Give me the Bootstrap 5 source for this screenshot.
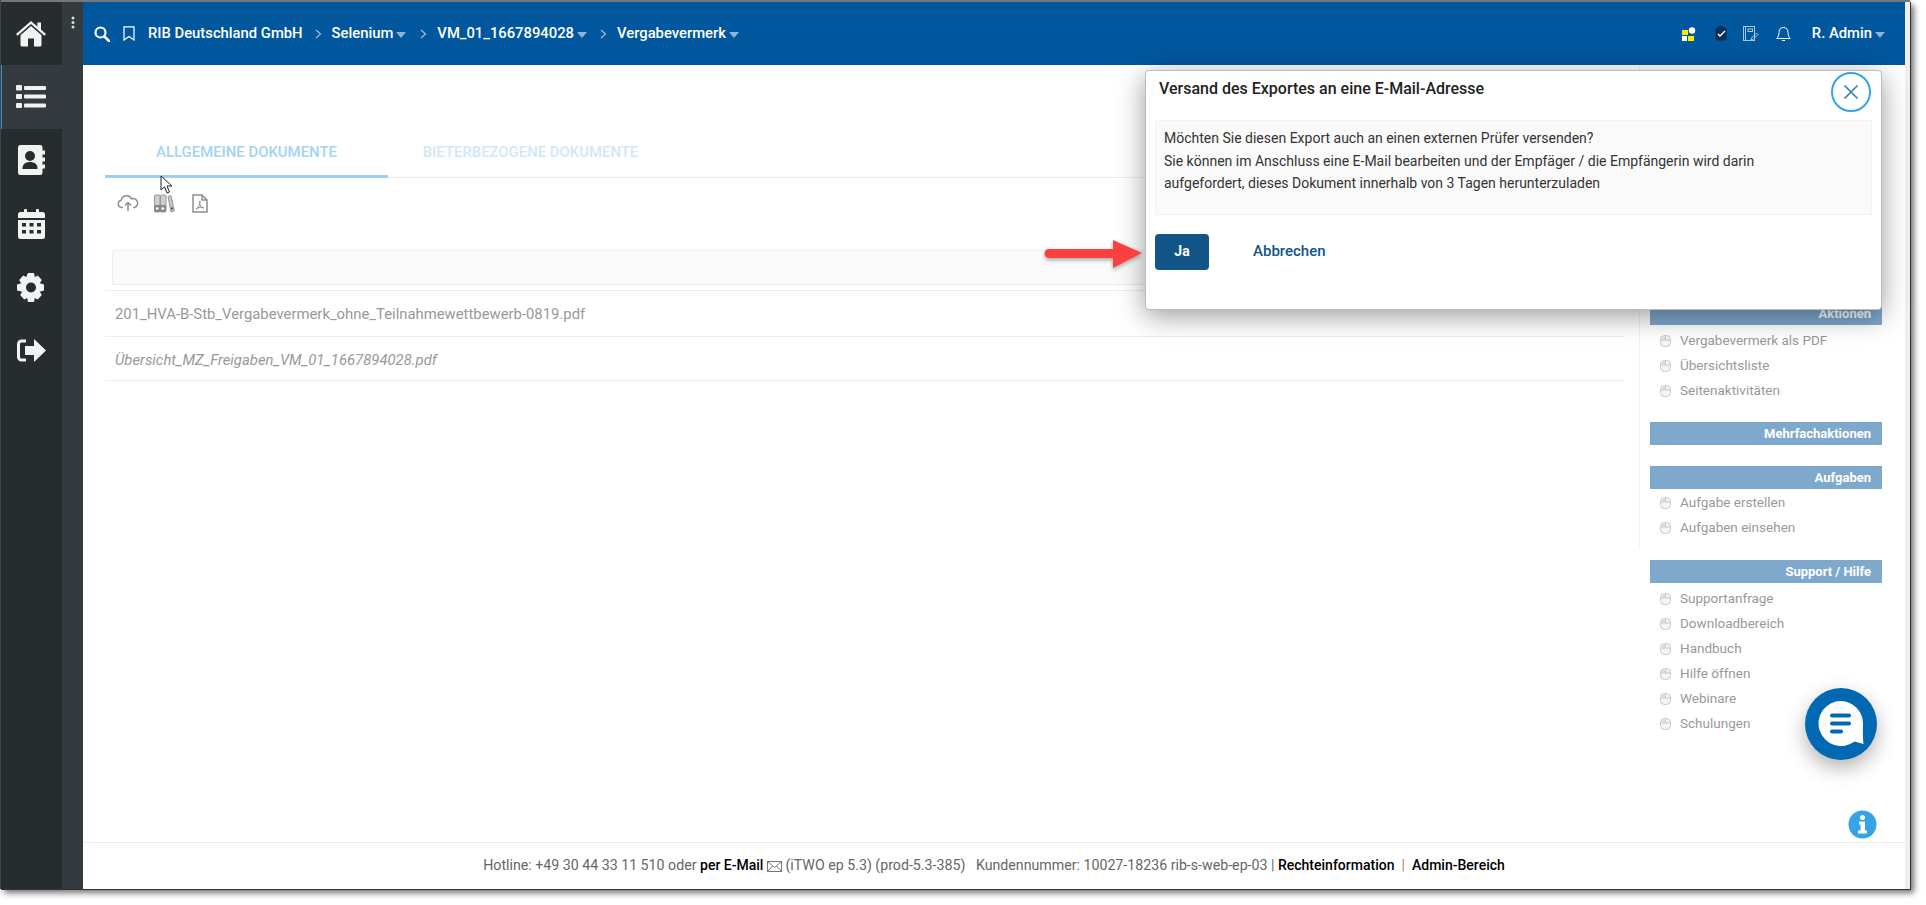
<!DOCTYPE html>
<html lang="de"><head><meta charset="utf-8"><title>Vergabevermerk</title>
<link href="https://cdn.jsdelivr.net/npm/bootstrap@5.3.0/dist/css/bootstrap.min.css" rel="stylesheet">
<style>
html,body{height:100%;overflow:hidden}
body{background:#fff;font-family:Roboto,"Liberation Sans",sans-serif;font-size:14px;color:#666;padding:2px 0 0 1px}
.shot-frame{position:relative;width:1910px;height:888px;background:#efefef;border-right:1px solid #333;border-bottom:1px solid #333;box-shadow:3px 3px 6px rgba(0,0,0,.55)}
.shot-frame::before{content:"";position:absolute;left:-1px;top:-2px;right:0;height:2px;background:#777}
.shot-frame::after{content:"";position:absolute;left:-1px;top:-2px;bottom:0;width:1px;background:#444}
.app-wrap{width:1904px;height:887px}
.side-rail{width:82px;background:#343b3e;flex:none}
.side-icons{width:61px;background:#272c2e}
.side-cell{height:63.5px;display:flex;align-items:center;justify-content:center;padding-right:1px}
.side-cell:first-child{height:63px}
.side-cell.on{background:#343b3e;border-left:1px solid #3c8dc8;padding-right:2px}
.side-strip{width:21px;padding-top:14px}
.top-bar{height:63px;background:#00579d;color:#fff;font-weight:500;font-size:14.8px;padding-left:11px;padding-right:20px}
.crumb-sep{margin:0 10px 0 12px}
.caret-dn{display:inline-block;width:0;height:0;border:5px solid transparent;border-top:6px solid #8fb4d3;border-bottom:0;margin-left:3px;margin-top:2px}
.work-area{background:#fff;min-height:0}
.doc-col{width:1543px;padding-left:22px;flex:none}
.tab-row{margin-top:77px;height:36px;border-bottom:1px solid #eee;width:1520px}
.tab-one,.tab-two{font-size:14.9px;font-weight:500;height:36px;line-height:20px;text-align:center;color:#a3d3f3}
.tab-one{width:283px;border-bottom:3px solid #9ccff2;height:36px}
.tab-two{width:285px;color:#cfe7f8}
.tool-row{height:40px;padding:10px 0 0 12px;gap:15px}
.filter-box{height:35px;margin:32px 0 5px 7px;background:#fafafa;border:1px solid #eee;border-radius:2px;width:1513px}
.doc-line{height:45.500px;line-height:46px;border-top:1px solid #eee;color:#999;font-size:14.85px;padding-left:10px;width:1520px}
.doc-line.it{font-style:italic;height:45px;border-bottom:1px solid #eee}
.act-col{width:279px;flex:none;padding-left:24px;position:relative}
.act-col::before{content:"";position:absolute;left:13px;top:0;height:485px;width:1px;background:#f2f2f2}
.act-head{background:#7fa9cc;color:#fff;font-weight:700;font-size:13px;text-align:right;height:23px;line-height:23px;padding-right:11px;width:232px}
.act-list{list-style:none;margin:0;padding:3px 0 0 10px}
.act-list.tight{padding-top:1px}
.act-list li{height:25px;line-height:25px;color:#999;font-size:13.5px;display:flex;align-items:center;gap:9px}
.bar-foot{height:47px;background:#fff;border-top:1px solid #eee;color:#666;font-size:14.2px;line-height:45px}
.bar-foot b{color:#000;font-weight:500;font-size:14px}
.bar-foot .pipe{color:#b8835a}
.dlg-box{position:absolute;left:1144px;top:68px;width:737px;height:240px;background:#fff;border:1px solid #bbb;border-radius:4px;box-shadow:0 6px 28px rgba(0,0,0,.4);padding:0 9px}
.dlg-title{font-size:16px;font-weight:500;color:#222;padding:8px 4px 0;height:49px;line-height:20px}
.dlg-msg{background:#fafafa;border:1px solid #f3f3f3;height:95px;padding:6px 8px;color:#333;font-size:14px;line-height:22.5px}
.dlg-x{position:absolute;right:10px;top:1px;width:40px;height:40px;border:2px solid #36a3e6;border-radius:50%;background:#fff;display:flex;align-items:center;justify-content:center;padding:0}
.dlg-yes{background:#115589;color:#fff;font-weight:700;font-size:14px;width:54px;height:36px;padding:0 0 2px;border:0;border-radius:4px}
.dlg-yes:hover{background:#115589;color:#fff}
.dlg-no{color:#115589;font-weight:500;font-size:15px;margin-left:44px;padding:0 0 2px;border:0}
.dlg-acts{margin-top:19px;align-items:center}
.over-arrow{position:absolute;left:1042px;top:236px}
.over-cursor{position:absolute;left:159px;top:173px}
.chat-fab{position:absolute;left:1804px;top:686px;width:72px;height:72px;border-radius:50%;background:#0069b1;box-shadow:0 8px 20px rgba(0,0,0,.3);display:flex;align-items:center;justify-content:center}
.info-fab{position:absolute;left:1847px;top:808px;width:29px;height:29px}
</style></head><body>
<svg width="0" height="0" class="position-absolute"><defs><symbol id="mouse-ico" viewBox="0 0 11 12"><rect x=".5" y=".5" width="10" height="11" rx="4" fill="#f4f4f4" stroke="#c8c8c8"/><rect x="2" y="1.500" width="3" height="3" fill="#f4d9c4"/><path d="M.5 5h10M5.500.5V5" stroke="#c8c8c8"/></symbol></defs></svg>
<div class="shot-frame">
<div class="app-wrap d-flex">
 <aside class="side-rail d-flex">
  <div class="side-icons">
   <div class="side-cell"><svg width="30" height="26" viewBox="0 0 30 26" fill="#f2f2f2"><path d="M15 0 0 13l1.600 1.800L15 3l13.400 11.800L30 13l-5-4.400V1.500h-3.600v4L15 0z"/><path d="M15 5 4.500 14.200V24a1.500 1.500 0 0 0 1.500 1.500h6v-8h6v8h6a1.500 1.500 0 0 0 1.500-1.500v-9.800z"/></svg></div>
   <div class="side-cell on"><svg width="30" height="25" viewBox="0 0 30 25" fill="#f2f2f2"><rect y="1" width="6" height="5.500" rx="1"/><rect y="10" width="6" height="5" rx="1"/><rect y="19" width="6" height="5" rx="1"/><rect x="8" y="2" width="22" height="4" rx="1"/><rect x="8" y="10.500" width="22" height="4" rx="1"/><rect x="8" y="19.500" width="22" height="4" rx="1"/></svg></div>
   <div class="side-cell"><svg width="27" height="30" viewBox="0 0 27 30"><path fill="#f2f2f2" d="M2.500 0H22a2.500 2.500 0 0 1 2.500 2.500v3H27v4h-2.500v3H27v4h-2.500v3H27v4h-2.500v4A2.500 2.500 0 0 1 22 30H2.500A2.500 2.500 0 0 1 0 27.500v-25A2.500 2.500 0 0 1 2.500 0z"/><circle cx="12" cy="11" r="5" fill="#272c2e"/><path fill="#272c2e" d="M4.500 23c0-4 3.500-6 7.500-6s7.500 2 7.500 6v1h-15z"/></svg></div>
   <div class="side-cell"><svg width="27" height="30" viewBox="0 0 27 30" fill="#f2f2f2"><rect x="6" width="3" height="6" rx="1"/><rect x="18" width="3" height="6" rx="1"/><path d="M2.500 3H24.500A2.500 2.500 0 0 1 27 5.500V9H0V5.500A2.500 2.500 0 0 1 2.500 3z"/><path fill-rule="evenodd" d="M0 11h27v16.500a2.500 2.500 0 0 1-2.500 2.500h-22A2.500 2.500 0 0 1 0 27.500zM4 14v3.500h4V14zm7.500 0v3.500h4V14zM19 14v3.500h4V14zM4 21v3.500h4V21zm7.500 0v3.500h4V21zM19 21v3.500h4V21z"/></svg></div>
   <div class="side-cell"><svg width="28" height="29" viewBox="0 0 28 29"><path fill="#f2f2f2" d="M11 0h6l.8 4 3-1.500 4 4.500-2 3.300 4.200 1.200v6l-4.200 1.200 2 3.300-4 4.500-3-1.500-.8 4h-6l-.8-4-3 1.500-4-4.500 2-3.300L0 17.500v-6l4.200-1.200-2-3.300 4-4.500 3 1.500z"/><circle cx="14" cy="14.500" r="5" fill="#272c2e"/></svg></div>
   <div class="side-cell"><svg width="29" height="23" viewBox="0 0 29 23"><path fill="none" stroke="#f2f2f2" stroke-width="3" d="M9 2H4.500A3 3 0 0 0 1.500 5v13a3 3 0 0 0 3 3H9"/><path fill="#f2f2f2" d="M8 7h9V0l12 11.500L17 23v-7H8z"/></svg></div>
  </div>
  <div class="side-strip d-flex flex-column align-items-center gap-1">
   <svg width="4" height="13" viewBox="0 0 4 13" fill="#ddd"><circle cx="2" cy="2" r="1.500"/><circle cx="2" cy="6.500" r="1.500"/><circle cx="2" cy="11" r="1.500"/></svg>
  </div>
 </aside>
 <div class="d-flex flex-column flex-grow-1 min-w-0">
  <header class="top-bar d-flex align-items-center">
   <svg width="16" height="16" viewBox="0 0 16 16" style="margin-right:13px"><circle cx="6.500" cy="6.500" r="5" fill="none" stroke="#fff" stroke-width="2.200"/><path d="m10.300 10.300 4.700 4.700" stroke="#fff" stroke-width="2.600" stroke-linecap="round"/></svg>
   <svg width="12" height="15" viewBox="0 0 12 15" style="margin-right:13px"><path d="M1 .8h10v13.200L6 10.500 1 14z" fill="none" stroke="#fff" stroke-width="1.200"/></svg>
   <span>RIB Deutschland GmbH</span>
   <svg class="crumb-sep" width="7" height="10" viewBox="0 0 7 10"><path d="m1 1 4.500 4L1 9" fill="none" stroke="#9dbdd8" stroke-width="1.200"/></svg>
   <span>Selenium</span><i class="caret-dn"></i>
   <svg class="crumb-sep" style="margin-left:14px" width="7" height="10" viewBox="0 0 7 10"><path d="m1 1 4.500 4L1 9" fill="none" stroke="#9dbdd8" stroke-width="1.200"/></svg>
   <span>VM_01_1667894028</span><i class="caret-dn"></i>
   <svg class="crumb-sep" style="margin-left:13px" width="7" height="10" viewBox="0 0 7 10"><path d="m1 1 4.500 4L1 9" fill="none" stroke="#9dbdd8" stroke-width="1.200"/></svg>
   <span>Vergabevermerk</span><i class="caret-dn"></i>
   <div class="ms-auto d-flex align-items-center">
    <svg width="14" height="14" viewBox="0 0 14 14" style="margin-right:19px"><rect y="3" width="6" height="5" fill="#ffe800"/><rect y="9" width="5" height="5" fill="#fff"/><rect x="6" y="9" width="6" height="5" fill="#ffe800"/><circle cx="10" cy="3.500" r="3.200" fill="#fff"/></svg>
    <svg width="13" height="15" viewBox="0 0 13 15" style="margin-right:15px"><rect x=".5" y="1.500" width="11" height="13" rx="2" fill="#0d2f55"/><rect x="3.500" y="0" width="5" height="3" rx="1" fill="#0d2f55"/><path d="m3 8 2 2 5-5" stroke="#fff" stroke-width="1.400" fill="none"/></svg>
    <svg width="16" height="16" viewBox="0 0 16 16" style="margin-right:17px" fill="none" stroke="#a9c7e0"><rect x=".5" y=".5" width="11" height="14"/><path d="M2.500.5v14"/><rect x="5" y="3" width="4.500" height="2.500"/><path d="m8 14 .5-2 5-5 1.500 1.500-5 5z"/></svg>
    <svg width="15" height="16" viewBox="0 0 15 16" style="margin-right:21px" fill="none" stroke="#fff"><path d="M7.500 1.500c-3 0-4.500 2-4.500 5 0 3-1 4.500-2.300 6h13.600C13 11 12 9.500 12 6.500c0-3-1.500-5-4.500-5z"/><path d="M6 14.500h3"/></svg>
    <span>R. Admin</span><i class="caret-dn"></i>
   </div>
  </header>
  <div class="d-flex flex-grow-1 work-area">
   <main class="doc-col">
    <div class="tab-row d-flex">
     <div class="tab-one">ALLGEMEINE DOKUMENTE</div>
     <div class="tab-two">BIETERBEZOGENE DOKUMENTE</div>
    </div>
    <div class="tool-row d-flex align-items-center">
     <svg width="22" height="17" viewBox="0 0 22 17" fill="none" stroke="#8f8f8f" stroke-width="1.500"><path d="M6 12.500H4.500a3.700 3.700 0 0 1-.3-7.300A5.500 5.500 0 0 1 14.500 3.800 4.400 4.400 0 0 1 17.500 12.500H16"/><path d="M11 16V8M8 10.500l3-3 3 3"/></svg>
     <svg width="21" height="19" viewBox="0 0 21 19"><rect x=".5" y="1" width="5.500" height="17" rx="1" fill="#cfcfcf" stroke="#999"/><rect x="6.500" y="1" width="5.500" height="17" rx="1" fill="#cfcfcf" stroke="#999"/><rect x=".5" y="11" width="11.500" height="7" rx="1" fill="#8a8a8a"/><circle cx="8.800" cy="14.500" r="1.300" fill="#fff"/><circle cx="3.200" cy="14.500" r="1.300" fill="#fff"/><path d="m14 2.500 3-.8 3.400 15.300-3.400 1z" fill="#c4c4c4" stroke="#999"/><circle cx="18" cy="14.500" r="1.200" fill="#666"/></svg>
     <svg width="16" height="19" viewBox="0 0 16 19" fill="none" stroke="#8f8f8f" stroke-width="1.500" style="margin-left:2px"><path d="M1 1h9l5 5v12H1z"/><path d="M10 1v5h5"/><path d="M8 7c0 4-2 7-4 8 3-2 6-2 8-1-3 0-5-3-4-7z" stroke-width="1"/></svg>
    </div>
    <div class="filter-box"></div>
    <div class="doc-line">201_HVA-B-Stb_Vergabevermerk_ohne_Teilnahmewettbewerb-0819.pdf</div>
    <div class="doc-line it">Übersicht_MZ_Freigaben_VM_01_1667894028.pdf</div>
   </main>
   <section class="act-col">
    <div class="act-head" style="margin-top:237px">Aktionen</div>
    <ul class="act-list">
     <li><svg width="11" height="12"><use href="#mouse-ico"/></svg>Vergabevermerk als PDF</li>
     <li><svg width="11" height="12"><use href="#mouse-ico"/></svg>Übersichtsliste</li>
     <li><svg width="11" height="12"><use href="#mouse-ico"/></svg>Seitenaktivitäten</li>
    </ul>
    <div class="act-head" style="margin-top:19px">Mehrfachaktionen</div>
    <div class="act-head" style="margin-top:21px">Aufgaben</div>
    <ul class="act-list tight">
     <li><svg width="11" height="12"><use href="#mouse-ico"/></svg>Aufgabe erstellen</li>
     <li><svg width="11" height="12"><use href="#mouse-ico"/></svg>Aufgaben einsehen</li>
    </ul>
    <div class="act-head" style="margin-top:20px">Support / Hilfe</div>
    <ul class="act-list">
     <li><svg width="11" height="12"><use href="#mouse-ico"/></svg>Supportanfrage</li>
     <li><svg width="11" height="12"><use href="#mouse-ico"/></svg>Downloadbereich</li>
     <li><svg width="11" height="12"><use href="#mouse-ico"/></svg>Handbuch</li>
     <li><svg width="11" height="12"><use href="#mouse-ico"/></svg>Hilfe öffnen</li>
     <li><svg width="11" height="12"><use href="#mouse-ico"/></svg>Webinare</li>
     <li><svg width="11" height="12"><use href="#mouse-ico"/></svg>Schulungen</li>
    </ul>
   </section>
  </div>
  <footer class="bar-foot text-center">Hotline: +49 30 44 33 11 510 oder <b>per E-Mail</b> <svg width="15" height="11" viewBox="0 0 15 11" fill="none" stroke="#777"><rect x=".5" y=".5" width="14" height="10"/><path d="m.5.500 7 6 7-6M.5 10.500l5-5.500M14.500 10.500l-5-5.500"/></svg> (iTWO ep 5.3) (prod-5.3-385) &nbsp; Kundennummer: 10027-18236 rib-s-web-ep-03 | <b>Rechteinformation</b> &nbsp;<span class="pipe">|</span>&nbsp; <b>Admin-Bereich</b></footer>
 </div>
</div>
<div class="dlg-box">
 <div class="dlg-title">Versand des Exportes an eine E-Mail-Adresse</div>
 <button type="button" class="dlg-x" aria-label="Schließen"><svg width="16" height="16" viewBox="0 0 16 16"><path d="m1.500 1.500 13 13M14.500 1.500l-13 13" stroke="#2f7fb8" stroke-width="1.600"/></svg></button>
 <div class="dlg-msg">Möchten Sie diesen Export auch an einen externen Prüfer versenden?<br>Sie können im Anschluss eine E-Mail bearbeiten und der Empfäger / die Empfängerin wird darin<br>aufgefordert, dieses Dokument innerhalb von 3 Tagen herunterzuladen</div>
 <div class="dlg-acts d-flex"><button type="button" class="btn dlg-yes">Ja</button><button type="button" class="btn dlg-no">Abbrechen</button></div>
</div>
<svg class="over-arrow" width="100" height="36" viewBox="0 0 100 36"><defs><filter id="as" x="-10%" y="-30%" width="120%" height="160%"><feDropShadow dx="0" dy="2" stdDeviation="2" flood-opacity=".35"/></filter></defs><path filter="url(#as)" fill="#fb4141" d="M6 11h64V2l29 13-29 15V20H6a4.500 4.500 0 0 1 0-9z"/></svg>
<svg class="over-cursor" width="13" height="20" viewBox="0 0 13 20"><path d="M1 1v14l3.500-3.200L7 18l2.500-1-2.500-6h5z" fill="#fff" stroke="#222"/></svg>
<div class="chat-fab"><svg width="46" height="46" viewBox="0 0 46 46"><path fill="#fff" d="M23 0a22.500 22.500 0 0 1 22 23c0 5-.5 10 .5 20l-9-2.500A22.500 22.500 0 1 1 23 0z"/><rect x="12" y="12.500" width="21" height="4" rx="2" fill="#0069b1"/><rect x="12" y="20.500" width="21" height="4" rx="2" fill="#0069b1"/><rect x="12" y="28.500" width="13" height="4" rx="2" fill="#0069b1"/></svg></div>
<svg class="info-fab" viewBox="0 0 29 29"><circle cx="14.500" cy="14.500" r="14" fill="#36a3e6"/><circle cx="14.500" cy="7.500" r="2.500" fill="#fff"/><path fill="#fff" d="M11 11.500h6v9h2v3H10v-3h2.500v-6H11z"/></svg>
</div>
<script src="https://cdn.jsdelivr.net/npm/bootstrap@5.3.0/dist/js/bootstrap.bundle.min.js"></script>
</body></html>
